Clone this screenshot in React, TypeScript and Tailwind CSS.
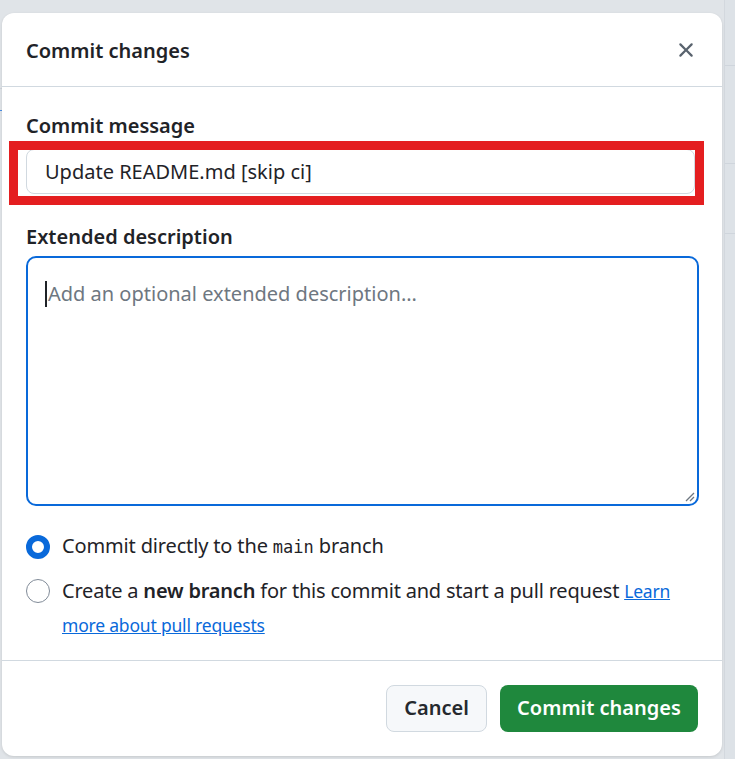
import React from "react";

export default function App() {
  const font = { fontFamily: '"Noto Sans", "Segoe UI", sans-serif' };
  return (
    <div className="relative w-[735px] h-[759px] overflow-hidden bg-[#e0e4e8]" style={font}>
      {/* dimmed page content behind */}
      <div className="absolute right-0 top-0 h-full w-[11px] border-l border-[#d3d8de] bg-[#dde2e7]">
        <div className="mt-[65px] border-t border-[#cfd5dc]" />
        <div className="mt-[97px] border-t border-[#cfd5dc]" />
        <div className="mt-[69px] border-t border-[#cfd5dc]" />
      </div>
      <div className="absolute left-0 top-[88px] w-[2px] border-t border-[#cfd5dc]" />
      <div className="absolute left-0 top-[110px] w-[2px] border-t border-[#4a8ee6]" />

      <div className="relative ml-[2px] mt-[13px] flex h-[743px] w-[720px] flex-col rounded-[12px] bg-white shadow-[0_1px_3px_rgba(0,0,0,0.12)]">
        {/* header */}
        <div className="flex h-[74px] shrink-0 items-center justify-between border-b border-[#d1d9e0] pl-[24px] pr-[24px]">
          <h1 className="mt-[2px] text-[20px] font-semibold text-[#1f2328]">Commit changes</h1>
          <svg width="24" height="24" viewBox="0 0 16 16" fill="#59636e">
            <path d="M3.72 3.72a.75.75 0 0 1 1.06 0L8 6.94l3.22-3.22a.749.749 0 0 1 1.275.326.749.749 0 0 1-.215.734L9.06 8l3.22 3.22a.749.749 0 0 1-.326 1.275.749.749 0 0 1-.734-.215L8 9.06l-3.22 3.22a.751.751 0 0 1-1.042-.018.751.751 0 0 1-.018-1.042L6.94 8 3.72 4.78a.75.75 0 0 1 0-1.06Z" />
          </svg>
        </div>

        {/* body */}
        <div className="flex flex-1 flex-col pl-[24px] pr-[23px] pt-[24px]">
          <label className="text-[20px] font-semibold leading-[30px] text-[#1f2328]">Commit message</label>
          <div className="mr-[4px] mt-[8px] flex h-[45px] items-center rounded-[8px] border border-[#d1d9e0] bg-white pl-[18px] text-[20px] text-[#1f2328]">
            Update README.md [skip ci]
          </div>

          <label className="mt-[28px] text-[20px] font-semibold leading-[30px] text-[#1f2328]">Extended description</label>
          <div className="relative mt-[4px] h-[250px] rounded-[10px] border-2 border-[#0969da] bg-white pl-[17px] pt-[20px]">
            <div className="flex items-center text-[20px] leading-[32px] text-[#6e7781]">
              <span className="mr-[1px] inline-block h-[26px] w-[2px] bg-[#1f2328]" />
              Add an optional extended description...
            </div>
            <svg className="absolute bottom-[2px] right-[2px]" width="12" height="12" viewBox="0 0 12 12">
              <path d="M11 3 L3 11 M11 7 L7 11" stroke="#6e7781" strokeWidth="1.3" />
            </svg>
          </div>

          <div className="mt-[23px] flex items-center gap-[12px]">
            <span className="h-[24px] w-[24px] shrink-0 rounded-full border-[6px] border-[#0969da] bg-white" />
            <span className="text-[20px] leading-[34px] tracking-[-0.15px] text-[#1f2328]">
              Commit directly to the <code className="text-[17px] tracking-normal" style={{ fontFamily: '"DejaVu Sans Mono", monospace' }}>main</code> branch
            </span>
          </div>

          <div className="mt-[10px] flex items-start gap-[12px]">
            <span className="mt-[5px] h-[24px] w-[24px] shrink-0 rounded-full border border-[#818b98] bg-white" />
            <span className="text-[20px] leading-[34px] tracking-[-0.2px] text-[#1f2328]">
              Create a <b className="font-semibold">new branch</b> for this commit and start a pull request{" "}
              <a className="text-[17.5px] text-[#0969da] underline">Learn more about pull requests</a>
            </span>
          </div>
        </div>

        {/* footer */}
        <div className="flex h-[96px] shrink-0 items-center justify-end gap-[13px] border-t border-[#d1d9e0] pb-[1px] pr-[24px]">
          <button className="h-[47px] w-[101px] rounded-[8px] border border-[#d1d9e0] bg-[#f6f8fa] text-[20px] font-semibold text-[#25292e]">
            Cancel
          </button>
          <button className="h-[47px] w-[198px] rounded-[8px] bg-[#1f883d] text-[20px] font-semibold text-white">
            Commit changes
          </button>
        </div>

        {/* red highlight */}
        <div className="pointer-events-none absolute left-[7px] top-[128px] h-[64px] w-[695px] border-[9px] border-[#e41e20]" />
      </div>
    </div>
  );
}
